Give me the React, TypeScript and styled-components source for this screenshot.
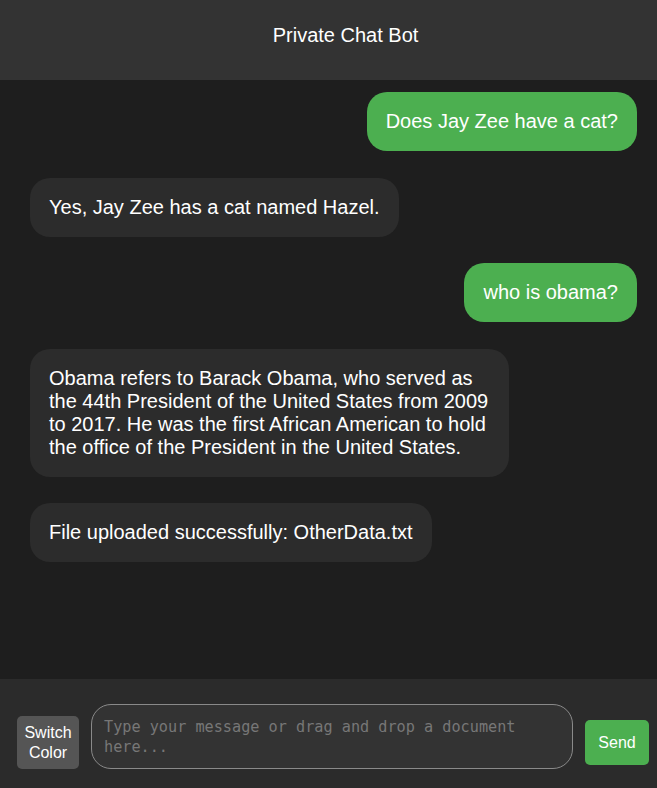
import React from "react";
import styled, { createGlobalStyle } from "styled-components";

const Global = createGlobalStyle`
  html, body {
    margin: 0;
    padding: 0;
    background: #1e1e1e;
    font-family: "Liberation Sans", Arial, sans-serif;
  }
  * { box-sizing: border-box; }
`;

const Page = styled.div`
  display: flex;
  flex-direction: column;
  height: 100vh;
  width: 100%;
  background: #1e1e1e;
  color: #ffffff;
  overflow: hidden;
`;

const Header = styled.header`
  background: #333333;
  padding: 24px 0 33px 34px;
  text-align: center;
  font-size: 20px;
  line-height: 23px;
  color: #ffffff;
  flex-shrink: 0;
`;

const Messages = styled.main`
  flex: 1;
  display: flex;
  flex-direction: column;
  gap: 26.5px;
  padding: 12px 20px 0 30px;
  overflow: hidden;
`;

const Bubble = styled.div<{ $user?: boolean }>`
  align-self: ${(p) => (p.$user ? "flex-end" : "flex-start")};
  max-width: 479px;
  padding: 18px 19px;
  border-radius: 20px;
  background: ${(p) => (p.$user ? "#4caf50" : "#2c2c2c")};
  color: #ffffff;
  font-size: 20px;
  line-height: 23px;
`;

const Bar = styled.footer`
  flex-shrink: 0;
  height: 109px;
  display: flex;
  align-items: center;
  gap: 12px;
  padding: 25px 8px 19px 17px;
  background: #2b2b2b;
`;

const SwitchButton = styled.button`
  margin-top: 12px;
  width: 62px;
  height: 53px;
  padding: 6px 4px;
  border: none;
  border-radius: 5px;
  background: #555555;
  color: #ffffff;
  font-family: "Liberation Sans", Arial, sans-serif;
  font-size: 16px;
  line-height: 20px;
  flex-shrink: 0;
`;

const Input = styled.textarea`
  flex: 0 0 482px;
  width: 482px;
  height: 65px;
  padding: 12px;
  border: 1px solid #8a8a8a;
  border-radius: 20px;
  background: #333333;
  color: #ffffff;
  font-family: "DejaVu Sans Mono", monospace;
  font-size: 15.2px;
  line-height: 20px;
  resize: none;
  outline: none;
  overflow: hidden;
  &::placeholder {
    color: #777777;
  }
`;

const SendButton = styled.button`
  margin-top: 12px;
  width: 64px;
  height: 45px;
  padding: 0;
  border: none;
  border-radius: 5px;
  background: #4caf50;
  color: #ffffff;
  font-family: "Liberation Sans", Arial, sans-serif;
  font-size: 16px;
  line-height: 18px;
  flex-shrink: 0;
`;

const messages: { user: boolean; text: string }[] = [
  { user: true, text: "Does Jay Zee have a cat?" },
  { user: false, text: "Yes, Jay Zee has a cat named Hazel." },
  { user: true, text: "who is obama?" },
  {
    user: false,
    text:
      "Obama refers to Barack Obama, who served as the 44th President of the United States from 2009 to 2017. He was the first African American to hold the office of the President in the United States.",
  },
  { user: false, text: "File uploaded successfully: OtherData.txt" },
];

export default function App() {
  return (
    <>
      <Global />
      <Page>
        <Header>Private Chat Bot</Header>
        <Messages>
          {messages.map((m, i) => (
            <Bubble key={i} $user={m.user}>
              {m.text}
            </Bubble>
          ))}
        </Messages>
        <Bar>
          <SwitchButton>
            Switch
            <br />
            Color
          </SwitchButton>
          <Input placeholder="Type your message or drag and drop a document here..." />
          <SendButton>Send</SendButton>
        </Bar>
      </Page>
    </>
  );
}
